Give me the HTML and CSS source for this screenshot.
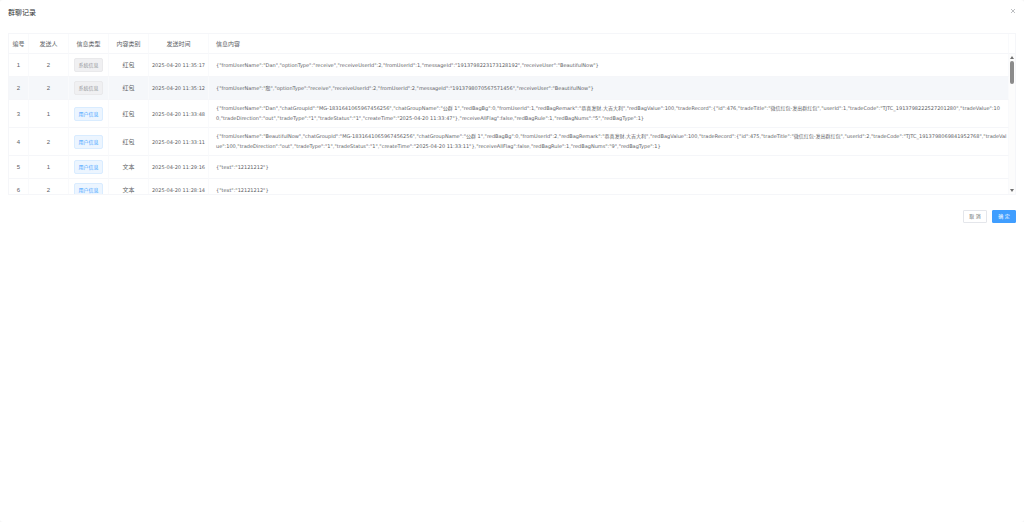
FILE: index.html
```html
<!DOCTYPE html>
<html>

<head>
    <meta charset="UTF-8">
    <meta name="viewport" content="width=device-width, initial-scale=1.0">
    <title>群聊记录</title>
    <link rel="stylesheet" href="styles.css">
</head>

<body>
    <div class="dialog" role="dialog" aria-labelledby="dialog-title">
        <div class="dialog-header">
            <h1 class="dialog-title" id="dialog-title">群聊记录</h1>
            <button class="dialog-close" type="button" aria-label="关闭">
                <svg viewBox="0 0 6 6"><path d="M1 1 L5 5 M5 1 L1 5" /></svg>
            </button>
        </div>

        <!-- Message table -->
        <div class="table-box">
            <div class="table-main">
                <div class="table-scroll">
                    <table>
                        <colgroup>
                            <col class="col-index">
                            <col class="col-normal">
                            <col class="col-normal">
                            <col class="col-normal">
                            <col class="col-time">
                            <col>
                        </colgroup>
                        <thead>
                            <tr>
                                <th>编号</th>
                                <th>发送人</th>
                                <th>信息类型</th>
                                <th>内容类别</th>
                                <th>发送时间</th>
                                <th class="content-head">信息内容</th>
                            </tr>
                        </thead>
                        <tbody>
                            <tr>
                                <td>1</td>
                                <td>2</td>
                                <td><span class="tag tag-info">系统信息</span></td>
                                <td>红包</td>
                                <td class="time">2025-04-20 11:35:17</td>
                                <td class="content">{"fromUserName":"Dan","optionType":"receive","receiveUserId":2,"fromUserId":1,"messageId":"1913798223173128192","receiveUser":"BeautifulNow"}</td>
                            </tr>
                            <tr class="hover">
                                <td>2</td>
                                <td>2</td>
                                <td><span class="tag tag-info">系统信息</span></td>
                                <td>红包</td>
                                <td class="time">2025-04-20 11:35:12</td>
                                <td class="content">{"fromUserName":"殷","optionType":"receive","receiveUserId":2,"fromUserId":2,"messageId":"1913798070567571456","receiveUser":"BeautifulNow"}</td>
                            </tr>
                            <tr>
                                <td>3</td>
                                <td>1</td>
                                <td><span class="tag">用户信息</span></td>
                                <td>红包</td>
                                <td class="time">2025-04-20 11:33:48</td>
                                <td class="content">{"fromUserName":"Dan","chatGroupId":"MG-1831641065967456256","chatGroupName":"公群 1","redBagBg":0,"fromUserId":1,"redBagRemark":"恭喜发财,大吉大利","redBagValue":100,"tradeRecord":{"id":476,"tradeTitle":"微信红包-发出群红包","userId":1,"tradeCode":"TJTC_1913798222527201280","tradeValue":100,"tradeDirection":"out","tradeType":"1","tradeStatus":"1","createTime":"2025-04-20 11:33:47"},"receiveAllFlag":false,"redBagRule":1,"redBagNums":"5","redBagType":1}</td>
                            </tr>
                            <tr>
                                <td>4</td>
                                <td>2</td>
                                <td><span class="tag">用户信息</span></td>
                                <td>红包</td>
                                <td class="time">2025-04-20 11:33:11</td>
                                <td class="content">{"fromUserName":"BeautifulNow","chatGroupId":"MG-1831641065967456256","chatGroupName":"公群 1","redBagBg":0,"fromUserId":2,"redBagRemark":"恭喜发财,大吉大利","redBagValue":100,"tradeRecord":{"id":475,"tradeTitle":"微信红包-发出群红包","userId":2,"tradeCode":"TJTC_1913798069841952768","tradeValue":100,"tradeDirection":"out","tradeType":"1","tradeStatus":"1","createTime":"2025-04-20 11:33:11"},"receiveAllFlag":false,"redBagRule":1,"redBagNums":"9","redBagType":1}</td>
                            </tr>
                            <tr>
                                <td>5</td>
                                <td>1</td>
                                <td><span class="tag">用户信息</span></td>
                                <td>文本</td>
                                <td class="time">2025-04-20 11:29:16</td>
                                <td class="content">{"text":"12121212"}</td>
                            </tr>
                            <tr>
                                <td>6</td>
                                <td>2</td>
                                <td><span class="tag">用户信息</span></td>
                                <td>文本</td>
                                <td class="time">2025-04-20 11:28:14</td>
                                <td class="content">{"text":"12121212"}</td>
                            </tr>
                        </tbody>
                    </table>
                </div>
            </div>
            <div class="gutter">
                <div class="gutter-head"></div>
                <div class="scrollbar">
                    <svg viewBox="0 0 6 4"><path d="M3 0 L5 3 H1 Z" /></svg>
                    <div class="thumb"></div>
                    <svg class="arrow-down" viewBox="0 0 6 4"><path d="M1 0 H5 L3 3 Z" /></svg>
                </div>
            </div>
        </div>

        <div class="dialog-footer">
            <button class="btn" type="button">取 消</button>
            <button class="btn btn-primary" type="button">确 定</button>
        </div>
    </div>
</body>

</html>
```
FILE: styles.css
```css
* {
    box-sizing: border-box;
}

body {
    margin: 0;
    background-color: #f5f5f5;
    color: #606266;
    font-family: "Liberation Sans", "Noto Sans CJK SC", sans-serif;
    font-size: 6px;
    line-height: 10px;
}

.dialog {
    min-height: 100vh;
    background-color: white;
    border-radius: 3px;
}

/* Header */
.dialog-header {
    display: flex;
    justify-content: space-between;
    align-items: flex-start;
    padding: 8px 8px 15px;
}

.dialog-title {
    margin: 0;
    font-size: 7px;
    font-weight: normal;
    line-height: 10px;
    color: #303133;
}

.dialog-close {
    width: 6px;
    height: 6px;
    padding: 0;
    border: none;
    background: none;
}

.dialog-close svg {
    display: block;
    width: 6px;
    height: 6px;
    fill: none;
    stroke: #909399;
    stroke-width: 0.6;
}

/* Table */
.table-box {
    display: flex;
    margin: 0 8px;
    border: 1px solid #f5f6f9;
}

.table-main {
    flex: 1;
    min-width: 0;
}

.table-scroll {
    height: 160px;
    overflow: hidden;
}

table {
    width: 100%;
    table-layout: fixed;
    border-collapse: separate;
    border-spacing: 0;
}

.col-index {
    width: 20px;
}

.col-normal {
    width: 40px;
}

.col-time {
    width: 60px;
}

th, td {
    height: 23px;
    padding: 4px 1px;
    border-right: 1px solid #f9fafc;
    border-bottom: 1px solid #f5f6f9;
    font-weight: normal;
    text-align: center;
}

th {
    height: 20px;
    color: #606266;
}

.time, .content {
    font-family: "DejaVu Sans", "Noto Sans CJK SC", sans-serif;
    font-size: 5px;
}

.time {
    white-space: nowrap;
}

.content {
    padding: 3px 0 4px 7px;
    text-align: left;
    word-break: break-all;
}

.content-head {
    padding-left: 7px;
    text-align: left;
}

.hover td {
    background-color: #f5f7fa;
}

.tag {
    display: block;
    width: 29px;
    margin: 0 auto;
    border: 1px solid #d9ecff;
    border-radius: 2px;
    background-color: #ecf5ff;
    color: #409eff;
    font-size: 5px;
    line-height: 12px;
}

.tag-info {
    border-color: #e9e9eb;
    background-color: #f0f0f2;
    color: #909399;
}

/* Scroll gutter */
.gutter {
    display: flex;
    flex-direction: column;
    width: 6px;
}

.gutter-head {
    height: 20px;
    border-bottom: 1px solid #f5f6f9;
}

.scrollbar {
    display: flex;
    flex: 1;
    flex-direction: column;
    align-items: center;
    padding: 2px 0 1px;
    background-color: #fcfcfc;
}

.scrollbar svg {
    width: 6px;
    height: 4px;
    fill: #707070;
}

.thumb {
    width: 4px;
    height: 23px;
    margin-top: 1px;
    border-radius: 2px;
    background-color: #8b8b8b;
}

.scrollbar .arrow-down {
    margin-top: auto;
}

/* Footer */
.dialog-footer {
    display: flex;
    justify-content: flex-end;
    gap: 5px;
    padding: 15px 8px;
}

.btn {
    width: 24px;
    height: 13px;
    padding: 0;
    border: 1px solid #e4e6eb;
    border-radius: 1px;
    background-color: white;
    color: #606266;
    font-family: inherit;
    font-size: 5px;
    line-height: 11px;
}

.btn-primary {
    border-color: #409eff;
    background-color: #409eff;
    color: white;
}
```
